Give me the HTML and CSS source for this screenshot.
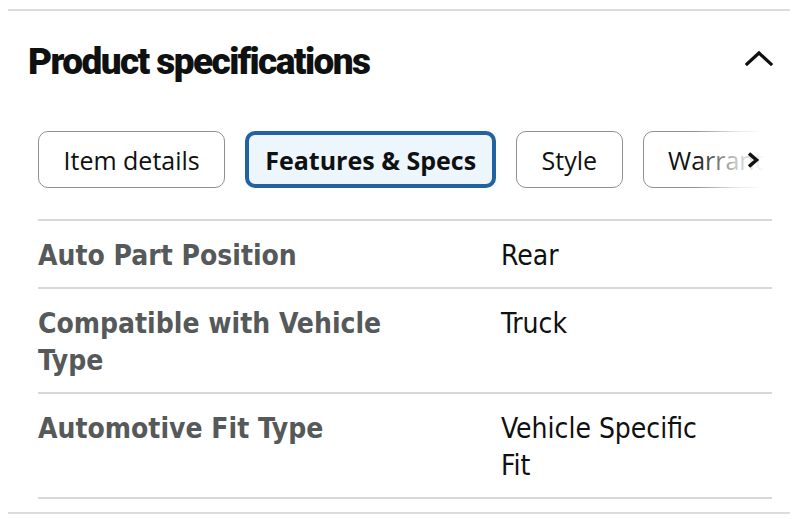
FILE: index.html
```html
<!DOCTYPE html>
<html>
<head>
<meta charset="utf-8">
<link rel="stylesheet" href="styles.css">
</head>
<body>
<div class="page">
  <section class="specs">
    <div class="specs-header">
      <h2 class="specs-title">Product specifications</h2>
      <svg class="chevron-up" width="28" height="16" viewBox="0 0 28 16"><path d="M2 14 L14 3 L26 14" fill="none" stroke="#0f1111" stroke-width="3.2" stroke-linecap="square"/></svg>
    </div>
    <div class="tabs-wrap">
      <div class="tabs">
        <button class="tab">Item details</button>
        <button class="tab tab-active">Features &amp; Specs</button>
        <button class="tab">Style</button>
        <button class="tab">Warranty</button>
      </div>
      <div class="tabs-fade">
        <svg class="chevron-right" width="16" height="18" viewBox="0 0 16 18"><path d="M4 2.5 L11.5 9 L4 15.5" fill="none" stroke="#0f1111" stroke-width="3.6"/></svg>
      </div>
    </div>
    <div class="table">
      <div class="row">
        <div class="label">Auto Part Position</div>
        <div class="value">Rear</div>
      </div>
      <div class="row">
        <div class="label">Compatible with Vehicle Type</div>
        <div class="value">Truck</div>
      </div>
      <div class="row">
        <div class="label">Automotive Fit Type</div>
        <div class="value">Vehicle Specific Fit</div>
      </div>
    </div>
  </section>
  <div class="bottom-rule"></div>
</div>
</body>
</html>
```

FILE: styles.css
```css
* { box-sizing: border-box; }
html, body { margin: 0; padding: 0; background: #fff; }
body { font-family: "DejaVu Sans Condensed", "DejaVu Sans", sans-serif; color: #0f1111; }
.page { width: 800px; height: 523px; overflow: hidden; padding-top: 9px; }
.specs { margin: 0 10px 0 8px; border-top: 2px solid #dcdcdc; }
.specs-header { display: flex; justify-content: space-between; align-items: center; height: 100px; padding: 0 17px 0 20px; }
.specs-title { margin: 0; font-family: Roboto, sans-serif; font-weight: 900; font-size: 37px; letter-spacing: -1.6px; color: #0f1111; }
.chevron-up { display: block; margin-top: -6px; }
.tabs-wrap { position: relative; margin: 20px 0 0 30px; width: 737px; overflow: hidden; }
.tabs { display: flex; gap: 20px; white-space: nowrap; }
.tab { flex: none; height: 57px; padding: 0 24.5px; border: 1.5px solid #8d9096; border-radius: 10px; background: #fff; font-family: "Open Sans", sans-serif; font-size: 25px; color: #0f1111; }
.tab-active { border: 4px solid #2162a1; background: #edf5fd; font-weight: 700; padding: 0 16px; }
.tabs-fade { position: absolute; top: 0; right: 0; width: 80px; height: 57px; background: linear-gradient(to right, rgba(255,255,255,0) 0%, rgba(255,255,255,0.75) 50%, #fff 88%); display: flex; align-items: center; padding-left: 50px; }
.chevron-right { display: block; }
.table { margin: 31px 18px 0 30px; border-top: 2px solid #d5d9d9; }
.row { display: grid; grid-template-columns: 463px 1fr; padding: 16px 0 13px; border-bottom: 2px solid #d5d9d9; font-size: 28px; line-height: 37px; }
.label { font-weight: 700; color: #565959; padding-right: 60px; }
.value { color: #0f1111; padding-right: 40px; }
.bottom-rule { margin: 13px 10px 0 8px; border-top: 2px solid #dcdcdc; }
```
